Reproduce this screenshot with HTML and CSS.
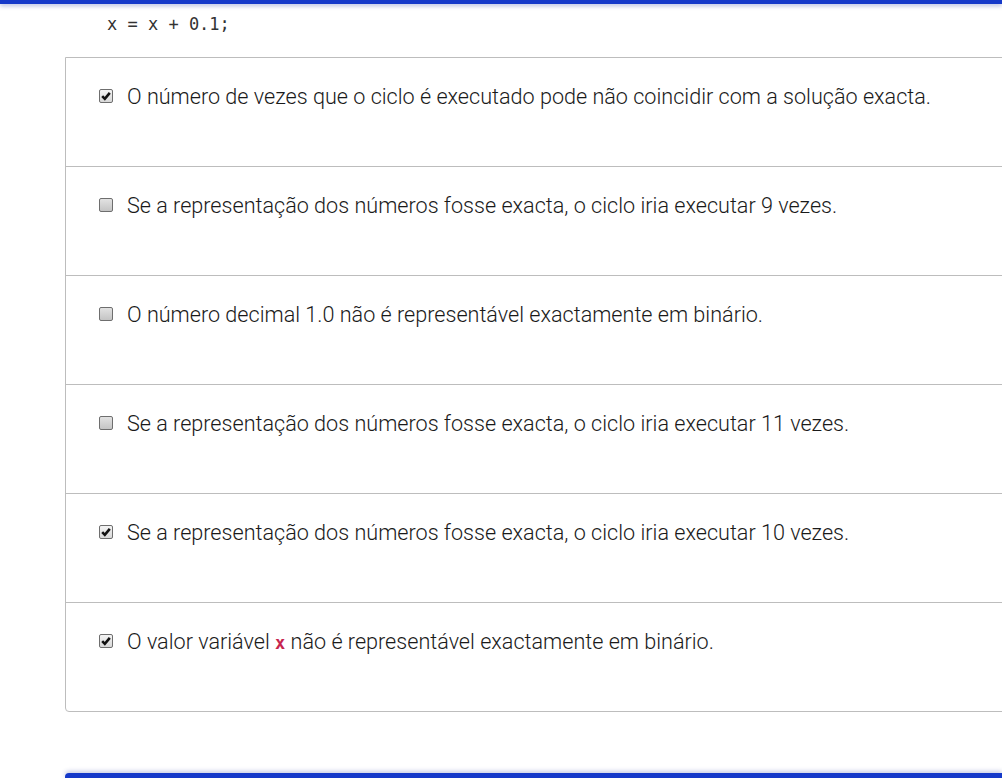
FILE: index.html
```html
<!DOCTYPE html>
<html lang="pt">
<head>
<meta charset="utf-8">
<link rel="stylesheet" href="styles.css">
</head>
<body>
<div class="topbar"></div>
<pre class="code">x = x + 0.1;</pre>
<div class="answers">
  <div class="row">
    <span class="cb checked"><svg viewBox="0 0 14 14" width="14" height="14"><path d="M3.2 7.2 L5.8 9.8 L10.8 3.8" fill="none" stroke="#111" stroke-width="2.6" stroke-linejoin="miter"/></svg></span>
    <span class="label">O número de vezes que o ciclo é executado pode não coincidir com a solução exacta.</span>
  </div>
  <div class="row">
    <span class="cb"></span>
    <span class="label">Se a representação dos números fosse exacta, o ciclo iria executar 9 vezes.</span>
  </div>
  <div class="row">
    <span class="cb"></span>
    <span class="label">O número decimal 1.0 não é representável exactamente em binário.</span>
  </div>
  <div class="row">
    <span class="cb"></span>
    <span class="label">Se a representação dos números fosse exacta, o ciclo iria executar 11 vezes.</span>
  </div>
  <div class="row">
    <span class="cb checked"><svg viewBox="0 0 14 14" width="14" height="14"><path d="M3.2 7.2 L5.8 9.8 L10.8 3.8" fill="none" stroke="#111" stroke-width="2.6" stroke-linejoin="miter"/></svg></span>
    <span class="label">Se a representação dos números fosse exacta, o ciclo iria executar 10 vezes.</span>
  </div>
  <div class="row">
    <span class="cb checked"><svg viewBox="0 0 14 14" width="14" height="14"><path d="M3.2 7.2 L5.8 9.8 L10.8 3.8" fill="none" stroke="#111" stroke-width="2.6" stroke-linejoin="miter"/></svg></span>
    <span class="label">O valor variável <code class="var">x</code> não é representável exactamente em binário.</span>
  </div>
</div>
<div class="bottombar"></div>
</body>
</html>
```
FILE: styles.css
```css
html, body {
  margin: 0;
  padding: 0;
  background: #fff;
  overflow: hidden;
  width: 1002px;
  height: 778px;
}
body {
  font-family: Roboto, "Liberation Sans", sans-serif;
  color: #1a1a1a;
}
.topbar {
  height: 4px;
  background: #1539c9;
  box-shadow: 0 2px 4px rgba(40, 60, 160, 0.35);
}
.code {
  margin: 0;
  padding: 10px 0 0 107px;
  height: 43px;
  font-family: "DejaVu Sans Mono", "Liberation Mono", monospace;
  font-size: 17px;
  line-height: 20px;
  color: #333;
}
.answers {
  margin-left: 65px;
  width: 1000px;
  border: 1px solid #bdbdbd;
  border-radius: 0 0 0 4px;
}
.row {
  height: 109px;
  box-sizing: border-box;
  padding: 27px 0 0 33px;
  display: flex;
  align-items: flex-start;
  border-top: 1px solid #bdbdbd;
}
.row:first-child {
  border-top: none;
  height: 108px;
}
.cb {
  flex: none;
  width: 14px;
  height: 14px;
  box-sizing: border-box;
  margin-top: 4px;
  margin-right: 14px;
  border: 1px solid #6e6e6e;
  border-radius: 2px;
  background: linear-gradient(#e2e2e2, #c4c4c4);
  position: relative;
}
.cb.checked {
  background: linear-gradient(#f4f4f4, #d8d8d8);
}
.cb svg {
  position: absolute;
  left: -1px;
  top: -1px;
}
.label {
  font-size: 21.6px;
  line-height: 24px;
  font-weight: 300;
}
.var {
  font-family: "DejaVu Sans Mono", monospace;
  font-size: 17px;
  color: #c7254e;
  font-weight: bold;
}
.bottombar {
  margin: 61px 0 0 65px;
  height: 6px;
  border-radius: 4px 0 0 0;
  background: #1539c9;
  box-shadow: 0 -2px 4px rgba(40, 60, 160, 0.25);
}
```
